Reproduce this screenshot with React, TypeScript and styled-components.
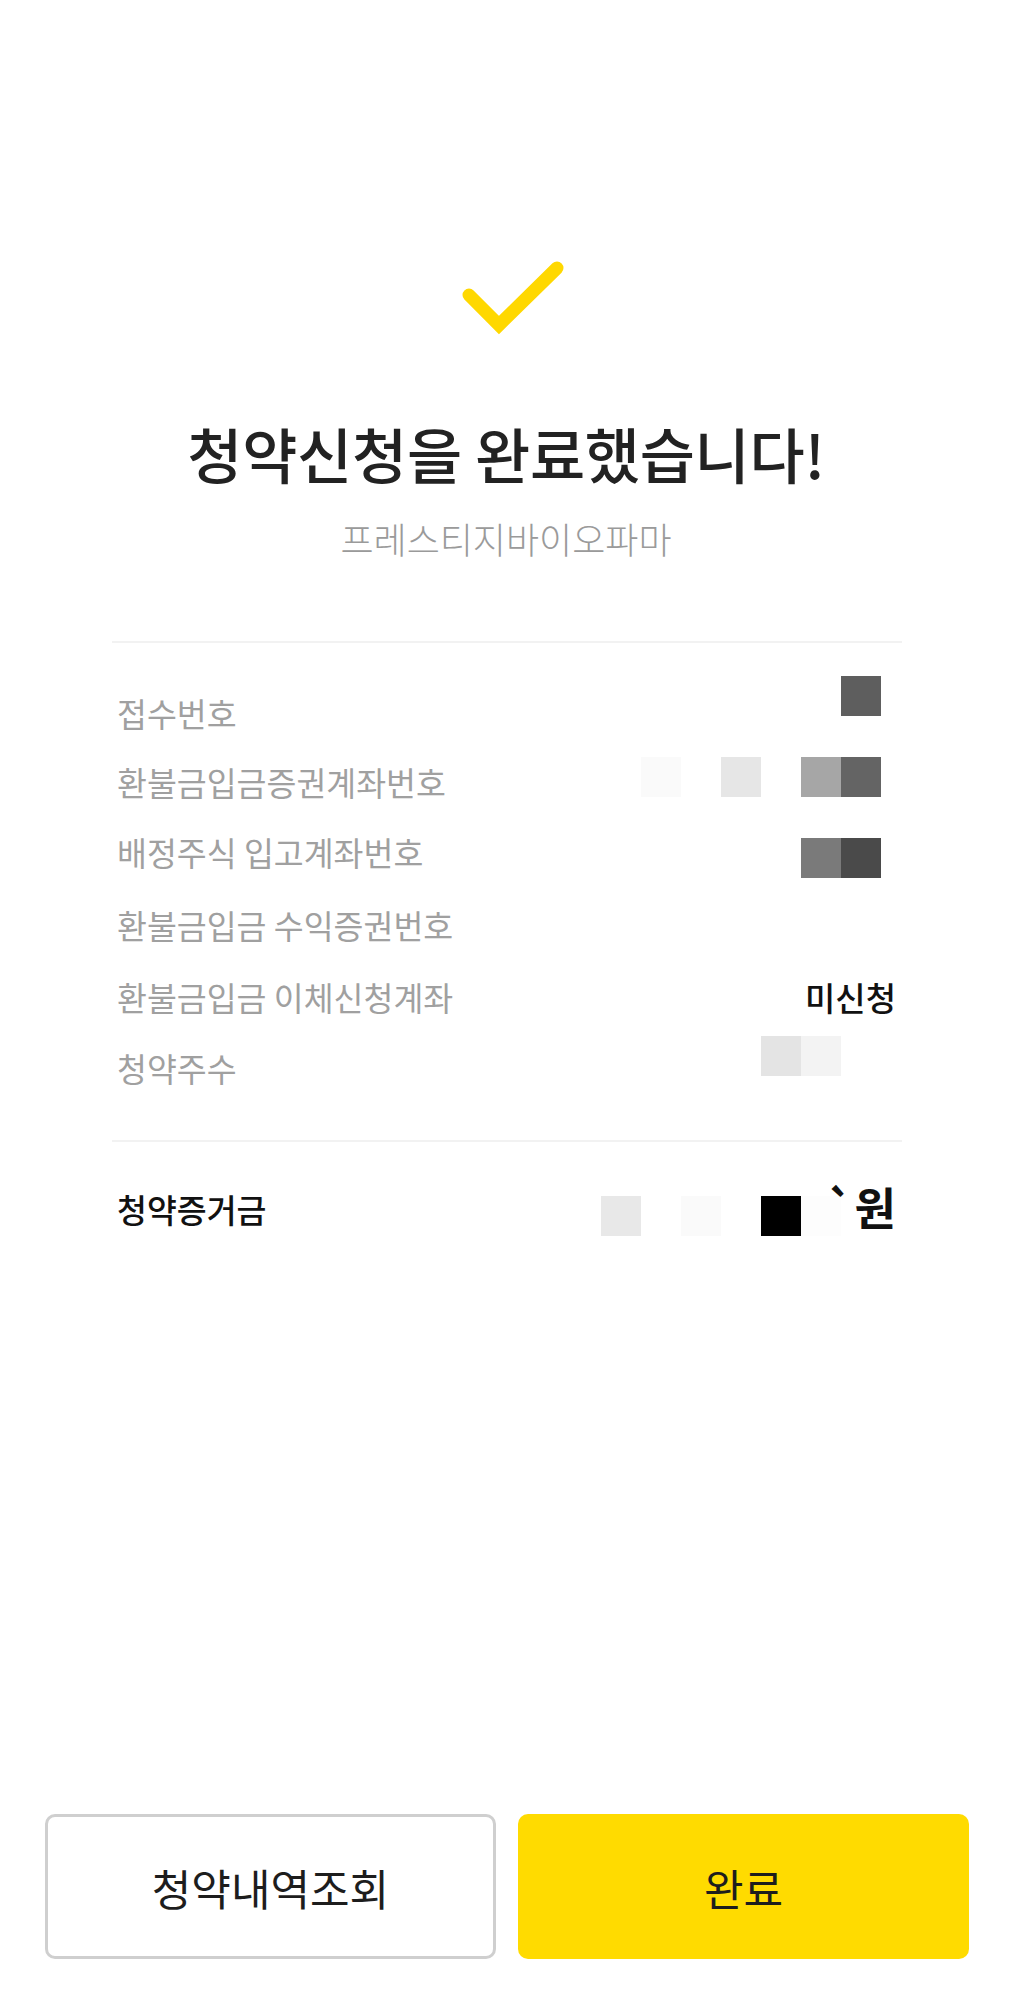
import React from "react";
import styled, { createGlobalStyle } from "styled-components";

const GlobalStyle = createGlobalStyle`
  html, body { margin: 0; padding: 0; background: #ffffff; }
  body { font-family: "Noto Sans CJK KR", "Noto Sans", sans-serif; }
  * { box-sizing: border-box; }
`;

const Page = styled.div`
  height: 100vh;
  display: flex;
  flex-direction: column;
  background: #ffffff;
`;

const Header = styled.header`
  display: flex;
  flex-direction: column;
  align-items: center;
  padding-top: 250px;
`;

const CheckIcon = styled.svg`
  display: block;
  width: 130px;
  height: 90px;
`;

const Title = styled.h1`
  margin: 77px 0 0;
  font-size: 60px;
  line-height: 72px;
  font-weight: 500;
  color: #222222;
  letter-spacing: -0.3px;
`;

const Subtitle = styled.p`
  margin: 27px 0 0;
  font-size: 36px;
  line-height: 44px;
  font-weight: 300;
  color: #9a9a9a;
`;

const Section = styled.section<{ $top: number; $bottom: number; $gap?: number }>`
  margin: ${(p) => p.$gap ?? 0}px 110px 0 112px;
  border-top: 2px solid #f2f2f2;
  padding-top: ${(p) => p.$top}px;
  padding-bottom: ${(p) => p.$bottom}px;
`;

const Row = styled.div<{ $h: number }>`
  height: ${(p) => p.$h}px;
  display: flex;
  align-items: center;
  justify-content: space-between;
  padding: 0 6px 0 5px;
`;

const Label = styled.span<{ $strong?: boolean }>`
  font-size: 32.5px;
  line-height: 40px;
  font-weight: ${(p) => (p.$strong ? 500 : 400)};
  color: ${(p) => (p.$strong ? "#111111" : "#a0a0a0")};
`;

const Value = styled.span`
  display: flex;
  align-items: center;
  font-size: 33px;
  line-height: 40px;
  font-weight: 500;
  color: #111111;
`;

const Mosaic = styled.span<{ $dy: number; $end: number }>`
  display: flex;
  margin-right: ${(p) => p.$end}px;
  transform: translateY(${(p) => p.$dy}px);
`;

const Cell = styled.span<{ $c: string | null }>`
  width: 40px;
  height: 40px;
  background: ${(p) => p.$c ?? "transparent"};
`;

const Amount = styled.span`
  margin-left: -15px;
  font-size: 45px;
  line-height: 50px;
  font-weight: 700;
  color: #111111;
  transform: translateY(-2px);
`;

const Footer = styled.footer`
  margin-top: auto;
  display: grid;
  grid-template-columns: 1fr 1fr;
  gap: 22px;
  padding: 0 43px 41px 45px;
`;

const Button = styled.button<{ $primary?: boolean }>`
  height: 145px;
  border-radius: 10px;
  border: ${(p) => (p.$primary ? "none" : "3px solid #cfcfcf")};
  background: ${(p) => (p.$primary ? "#ffdb00" : "#ffffff")};
  font-family: "Noto Sans CJK KR", "Noto Sans", sans-serif;
  font-size: 43px;
  font-weight: 400;
  color: #1d1d1d;
  cursor: pointer;
`;

type Info = {
  label: string;
  h: number;
  text?: string;
  cells?: (string | null)[];
  dy?: number;
};

const rows: Info[] = [
  { label: "접수번호", h: 70, cells: ["#5e5e5e"], dy: -17 },
  {
    label: "환불금입금증권계좌번호",
    h: 68.5,
    cells: ["#fafafa", null, "#e6e6e6", null, "#a6a6a6", "#646464"],
    dy: -5,
  },
  { label: "배정주식 입고계좌번호", h: 71, cells: ["#7a7a7a", "#4a4a4a"], dy: 6 },
  { label: "환불금입금 수익증권번호", h: 74 },
  { label: "환불금입금 이체신청계좌", h: 71.5, text: "미신청" },
  { label: "청약주수", h: 70, cells: ["#e4e4e4", "#f3f3f3", null], dy: -12 },
];

export default function App() {
  return (
    <Page>
      <GlobalStyle />
      <Header>
        <CheckIcon viewBox="0 0 130 90">
          <polyline
            points="28,45 58,75 116,18"
            fill="none"
            stroke="#ffd800"
            strokeWidth={13}
            strokeLinecap="round"
            strokeLinejoin="miter"
          />
        </CheckIcon>
        <Title>청약신청을 완료했습니다!</Title>
        <Subtitle>프레스티지바이오파마</Subtitle>
      </Header>

      <Section $top={35} $bottom={37} $gap={81}>
        {rows.map((r) => (
          <Row key={r.label} $h={r.h}>
            <Label>{r.label}</Label>
            <Value>
              {r.text}
              {r.cells && (
                <Mosaic $dy={r.dy ?? 0} $end={15}>
                  {r.cells.map((c, i) => (
                    <Cell key={i} $c={c} />
                  ))}
                </Mosaic>
              )}
            </Value>
          </Row>
        ))}
      </Section>

      <Section $top={31} $bottom={0}>
        <Row $h={71}>
          <Label $strong>청약증거금</Label>
          <Value>
            <Mosaic $dy={7} $end={0}>
              {["#e8e8e8", null, "#fafafa", null, "#000000", "#fdfdfd"].map(
                (c, i) => (
                  <Cell key={i} $c={c} />
                )
              )}
            </Mosaic>
            <Amount>`원</Amount>
          </Value>
        </Row>
      </Section>

      <Footer>
        <Button>청약내역조회</Button>
        <Button $primary>완료</Button>
      </Footer>
    </Page>
  );
}
